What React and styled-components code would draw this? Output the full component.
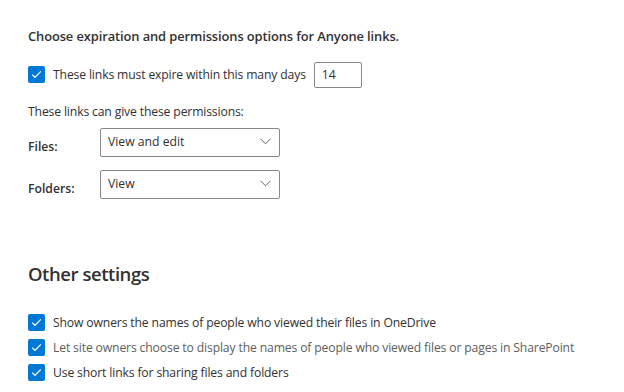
import React from "react";
import styled, { createGlobalStyle } from "styled-components";

const GlobalStyle = createGlobalStyle`
  body {
    margin: 0;
    background: #fff;
    font-family: "Open Sans", "Noto Sans", sans-serif;
    color: #323130;
  }
`;

const Page = styled.div`
  width: 624px;
  height: 392px;
  box-sizing: border-box;
  padding: 26px 0 0 28px;
  overflow: hidden;
`;

const Heading = styled.div`
  font-size: 12.9px;
  font-weight: 600;
  line-height: 20px;
  letter-spacing: -0.1px;
`;

const Title = styled.div`
  font-size: 18.5px;
  font-weight: 600;
  line-height: 26px;
  letter-spacing: -0.45px;
  margin-top: 62px;
  margin-bottom: 23px;
`;

const CheckRow = styled.div`
  display: flex;
  align-items: center;
  gap: 8px;
  height: ${p => p.height || 25}px;
  margin-top: ${p => p.top || 0}px;
`;

const Box = styled.span`
  width: 17px;
  height: 17px;
  border-radius: 2px;
  background: #0078d4;
  display: flex;
  align-items: center;
  justify-content: center;
  flex-shrink: 0;
`;

const Label = styled.span`
  font-size: 12.2px;
  letter-spacing: -0.15px;
  color: ${p => p.muted ? "#605e5c" : "#323130"};
`;

const NumberBox = styled.div`
  width: 48px;
  height: 26px;
  border: 1px solid #8a8886;
  border-radius: 2px;
  display: flex;
  align-items: center;
  padding-left: 7px;
  box-sizing: border-box;
  font-size: 12.2px;
`;

const SubText = styled.div`
  font-size: 12.2px;
  letter-spacing: -0.15px;
  margin-top: 14px;
  line-height: 18px;
`;

const FieldRow = styled.div`
  display: flex;
  align-items: center;
  margin-top: ${p => p.top}px;
`;

const FieldLabel = styled.div`
  width: 72px;
  font-size: 12.2px;
  font-weight: 600;
  padding-top: 8px;
`;

const Select = styled.div`
  width: 180px;
  height: 29px;
  box-sizing: border-box;
  border: 1px solid #8a8886;
  border-radius: 2px;
  display: flex;
  align-items: center;
  justify-content: space-between;
  padding: 0 8px 3px 7px;
  font-size: 12.2px;
`;

const Check = () => (
  <Box>
    <svg width="11" height="9" viewBox="0 0 11 9">
      <path d="M1.2 4.6 L4 7.3 L9.8 1.4" fill="none" stroke="#fff" strokeWidth="1.2" />
    </svg>
  </Box>
);

const Chevron = () => (
  <svg width="11" height="7" viewBox="0 0 11 7">
    <path d="M0.5 0.8 L5.5 5.8 L10.5 0.8" fill="none" stroke="#605e5c" strokeWidth="1" />
  </svg>
);

export default function App() {
  return (
    <Page>
      <GlobalStyle />
      <Heading>Choose expiration and permissions options for Anyone links.</Heading>
      <CheckRow height={29} top={14}>
        <Check />
        <Label>These links must expire within this many days</Label>
        <NumberBox>14</NumberBox>
      </CheckRow>
      <SubText>These links can give these permissions:</SubText>
      <FieldRow top={7}>
        <FieldLabel>Files:</FieldLabel>
        <Select>View and edit<Chevron /></Select>
      </FieldRow>
      <FieldRow top={13}>
        <FieldLabel>Folders:</FieldLabel>
        <Select>View<Chevron /></Select>
      </FieldRow>
      <Title>Other settings</Title>
      <CheckRow>
        <Check />
        <Label>Show owners the names of people who viewed their files in OneDrive</Label>
      </CheckRow>
      <CheckRow>
        <Check />
        <Label muted>Let site owners choose to display the names of people who viewed files or pages in SharePoint</Label>
      </CheckRow>
      <CheckRow>
        <Check />
        <Label>Use short links for sharing files and folders</Label>
      </CheckRow>
    </Page>
  );
}
